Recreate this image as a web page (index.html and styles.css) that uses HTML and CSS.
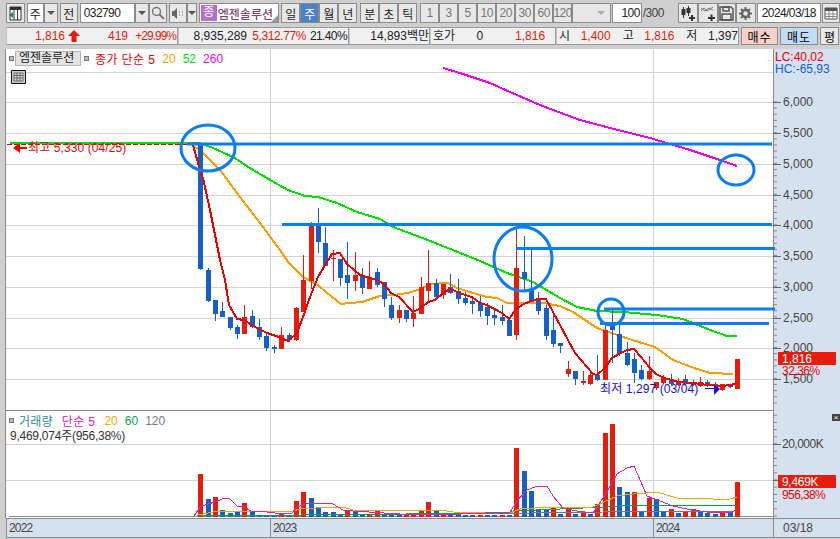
FILE: index.html
```html
<!DOCTYPE html>
<html lang="ko">
<head>
  <meta charset="UTF-8" />
  <title>엠젠솔루션 차트</title>
  <link rel="stylesheet" href="styles.css">
</head>
<body>
  <div class="toolbar">
    <button class="btn btn-icon"><svg width="15" height="15" viewBox="0 0 15 15"><path d="M2 1h11v13H2z" fill="#fff" stroke="#333"/><path d="M2 1h11v3H2z" fill="#333"/><path d="M6 4v10M9.5 4v10" stroke="#333"/><path d="M1 9l4-3v6z" fill="#2c7d7d"/></svg></button>
    <div class="tool-group">
      <span class="field field-type">주</span><button class="btn btn-drop"><i class="caret"></i></button>
    </div>
    <button class="btn btn-all">전</button>
    <div class="tool-group">
      <span class="field field-code">032790</span><button class="btn btn-drop"><i class="caret"></i></button>
      <button class="btn btn-icon-sm"><svg width="14" height="14" viewBox="0 0 14 14"><circle cx="5.5" cy="5.5" r="4" fill="none" stroke="#777" stroke-width="1.5"/><path d="M8.5 8.5l4.5 4.5" stroke="#777" stroke-width="2"/></svg></button>
    </div>
    <div class="tool-group">
      <button class="btn btn-speaker"><svg width="13" height="13" viewBox="0 0 13 13"><path d="M1 4h2l3-3v11l-3-3H1z" fill="#666"/><path d="M8 5h1M8 8h1M11 5h1M11 8h1" stroke="#666"/></svg></button>
      <button class="btn btn-drop-sm"><i class="caret"></i></button>
    </div>
    <div class="name-box"><span class="name-mark">종</span><span class="name-text">엠젠솔루션</span><i class="name-corner"></i></div>
    <div class="tool-group tool-periods">
      <button class="btn btn-period">일</button>
      <button class="btn btn-period btn-active">주</button>
      <button class="btn btn-period">월</button>
      <button class="btn btn-period">년</button>
    </div>
    <div class="tool-group tool-units">
      <button class="btn btn-period">분</button>
      <button class="btn btn-period">초</button>
      <button class="btn btn-period">틱</button>
    </div>
    <div class="tool-group tool-steps">
      <button class="btn btn-step">1</button>
      <button class="btn btn-step">3</button>
      <button class="btn btn-step">5</button>
      <button class="btn btn-step">10</button>
      <button class="btn btn-step">20</button>
      <button class="btn btn-step">30</button>
      <button class="btn btn-step">60</button>
      <button class="btn btn-step">120</button>
    </div>
    <div class="btn btn-blank"><i class="caret caret-light"></i></div>
    <span class="field field-count">100</span>
    <span class="count-total">/300</span>
    <div class="tool-group tool-icons">
      <button class="btn btn-tool"><svg width="16" height="16" viewBox="0 0 16 16"><path d="M3.5 2v11M8.5 1v10" stroke="#333"/><path d="M1.5 4h4v6h-4zM6.5 3h4v5h-4z" fill="#333"/><path d="M9 13h6M12 10v6" stroke="#333" stroke-width="2"/></svg></button>
      <button class="btn btn-tool"><svg width="16" height="16" viewBox="0 0 16 16"><path d="M1 6l3-3 3 3 3-2 3-2M1 3l4 3 4-3 4 2" fill="none" stroke="#777"/><path d="M8 13h7M11.5 9.5v6.5" stroke="#333" stroke-width="2"/></svg></button>
      <button class="btn btn-save"><svg width="15" height="15" viewBox="0 0 15 15"><path d="M1 1h11l2 2v11H1z" fill="none" stroke="#555" stroke-width="1.5"/><path d="M4 1h6v4H4zM3 8h9v6H3z" fill="none" stroke="#555" stroke-width="1.5"/></svg></button>
      <button class="btn btn-tool"><svg width="15" height="15" viewBox="0 0 15 15"><circle cx="7.5" cy="7.5" r="3.5" fill="none" stroke="#666" stroke-width="2.5"/><path d="M7.5 1v3M7.5 11v3M1 7.5h3M11 7.5h3M3 3l2 2M10 10l2 2M12 3l-2 2M5 10l-2 2" stroke="#666" stroke-width="2"/></svg></button>
    </div>
    <span class="field field-date">2024/03/18</span>
    <button class="btn btn-cal"><svg width="14" height="14" viewBox="0 0 14 14"><path d="M1 2h12v11H1z" fill="#fff" stroke="#555"/><path d="M1 2h12v3H1z" fill="#555"/><path d="M5 5v8M9 5v8M1 8h12M1 10.5h12" stroke="#888"/></svg></button>
  </div>

  <div class="quote">
    <div class="quote-cell cell-price">
      <span class="num up q-price">1,816</span>
      <svg class="q-arrow" width="14" height="12" viewBox="0 0 14 12"><path d="M7 0l6 6H9.5v6h-5V6H1z" fill="#e81c0c"/></svg>
      <span class="num up q-change">419</span>
      <span class="num up q-rate">+29.99%</span>
    </div>
    <div class="quote-cell cell-volume">
      <span class="num q-volume">8,935,289</span>
      <span class="num up q-volrate">5,312.77%</span>
      <span class="num q-turnover">21.40%</span>
    </div>
    <div class="quote-cell cell-amount">
      <span class="num q-amount">14,893백만</span>
    </div>
    <div class="quote-cell cell-ask">
      <span class="q-label">호가</span>
      <span class="num q-zero">0</span>
      <span class="num up q-ask">1,816</span>
    </div>
    <div class="quote-cell cell-ohl">
      <span class="q-label">시</span><span class="num up q-ohl">1,400</span>
      <span class="q-label q-gap">고</span><span class="num up q-ohl">1,816</span>
      <span class="q-label q-gap">저</span><span class="num q-ohl">1,397</span>
    </div>
    <button class="trade trade-buy">매수</button>
    <button class="trade trade-sell">매도</button>
    <button class="trade trade-flat">평</button>
  </div>

  <div class="chart">
    <div class="pane pane-price">
      <svg id="pricePlot" class="plot" width="767" height="362" viewBox="6 49 767 362"></svg>
      <svg id="priceAxis" class="axis" width="67" height="362" viewBox="773 49 67 362"></svg>
      <div class="legend">
        <i class="dot"></i><span class="legend-name">엠젠솔루션</span><i class="dot"></i>
        <span class="c-red legend-first">종가 단순 5</span>
        <span class="c-orange">20</span><span class="c-green">52</span><span class="c-magenta">260</span>
      </div>
      <svg class="grid-icon" width="15" height="14" viewBox="0 0 15 14"><path d="M.5.5h14v13H.5z" fill="#ccc" stroke="#111"/><path d="M3 3h9v8H3z" fill="#ddd" stroke="#666"/><path d="M6 3v8M9 3v8M3 5.5h9M3 8h9" stroke="#666"/></svg>
    </div>
    <div class="pane pane-volume">
      <svg id="volumePlot" class="plot" width="767" height="107" viewBox="6 412 767 107"></svg>
      <svg id="volumeAxis" class="axis" width="67" height="107" viewBox="773 412 67 107"></svg>
      <div class="legend">
        <i class="dot"></i><span class="c-teal legend-title">거래량</span>
        <span class="c-pink legend-ma">단순 5</span>
        <span class="c-amber">20</span><span class="c-dgreen">60</span><span class="c-gray">120</span>
      </div>
      <div class="volume-note">9,469,074주(956,38%)</div>
      <button class="close-btn">×</button>
    </div>
    <div class="dates">
      <span class="date date-2022">2022</span>
      <span class="date date-2023">2023</span>
      <span class="date date-2024">2024</span>
      <span class="date date-last">03/18</span>
    </div>
  </div>

  <script src="chart.js"></script>
</body>
</html>
```

FILE: styles.css
```css
* {
  box-sizing: border-box;
}

body {
  margin: 0;
  width: 840px;
  height: 539px;
  overflow: hidden;
  background-color: #cfcfcf;
  font-family: "Liberation Sans", "Noto Sans CJK KR", sans-serif;
  font-size: 12px;
  color: #222;
}

button {
  font-family: inherit;
  font-size: 12px;
  padding: 0;
  margin: 0;
}

/* top toolbar */
.toolbar {
  display: flex;
  align-items: stretch;
  height: 20px;
  margin-top: 3px;
  padding-left: 6px;
}

.tool-group {
  display: flex;
}

.btn {
  display: flex;
  align-items: center;
  justify-content: center;
  height: 20px;
  border: 1px solid #8b8b8b;
  background-color: #e8e8e8;
  color: #222;
}

.btn-icon { width: 19px; margin-right: 2px; }
.btn-drop { width: 14px; }
.btn-all { width: 18px; margin: 0 2px; }
.btn-icon-sm { width: 18px; }
.btn-speaker { width: 18px; margin-left: 2px; }
.btn-drop-sm { width: 10px; }
.btn-period { width: 19px; }
.btn-step { width: 19px; color: #777; letter-spacing: -0.5px; }
.btn-tool { width: 20px; }
.btn-save { width: 18px; }
.btn-cal { width: 18px; margin-left: 1px; }
.btn-active { background-color: #4a82c4; color: #fff; }
.btn-blank { width: 39px; justify-content: flex-end; padding-right: 5px; }

.tool-periods { margin-left: 2px; }
.tool-units { margin-left: 3px; }
.tool-steps { margin-left: 3px; }
.tool-icons { margin-left: 10px; margin-right: 1px; }

.caret {
  display: block;
  width: 0;
  height: 0;
  border-left: 4px solid transparent;
  border-right: 4px solid transparent;
  border-top: 4px solid #555;
}

.caret-light {
  border-top-color: #aaa;
}

.field {
  display: flex;
  align-items: center;
  height: 20px;
  border: 1px solid #8b8b8b;
  background-color: #fff;
}

.field-type { width: 17px; justify-content: center; }
.field-code { width: 55px; padding-left: 3px; letter-spacing: -0.6px; }
.field-count { width: 30px; margin-left: 1px; justify-content: flex-end; padding-right: 1px; letter-spacing: -0.6px; }
.field-date { width: 65px; justify-content: center; letter-spacing: -0.6px; }

.count-total {
  width: 25px;
  margin-left: 1px;
  line-height: 20px;
  color: #444;
  letter-spacing: -0.6px;
}

.name-box {
  position: relative;
  display: flex;
  align-items: center;
  width: 81px;
  height: 20px;
  margin-left: 2px;
  border: 1px solid #8b8b8b;
  background-color: #fff;
}

.name-mark {
  width: 16px;
  height: 16px;
  margin-left: 1px;
  background-color: #b46fd0;
  color: #fff;
  line-height: 15px;
  text-align: center;
}

.name-text {
  margin-left: 1px;
  color: #6b0f5f;
  white-space: nowrap;
}

.name-corner {
  position: absolute;
  right: 0;
  bottom: 0;
  border-left: 7px solid transparent;
  border-bottom: 7px solid #999;
}

/* quote strip */
.quote {
  display: flex;
  height: 18px;
  margin-top: 4px;
  padding-left: 6px;
  line-height: 16px;
}

.quote-cell {
  display: flex;
  height: 18px;
  border: 1px solid #9a9a9a;
  border-left-color: #c4c4c4;
  background-color: #f0f0f0;
  white-space: nowrap;
}

.cell-price { width: 172px; }
.cell-volume { width: 171px; }
.cell-amount { width: 81px; }
.cell-ask { width: 126px; }
.cell-ohl { width: 183px; }

.num { display: block; text-align: right; }
.up { color: #e81c0c; }

.q-price { width: 58px; }
.q-arrow { margin: 2px 0 0 2px; }
.q-change { width: 47px; }
.q-rate { width: 48px; letter-spacing: -1px; }
.q-volume { width: 68px; }
.q-volrate { width: 59px; letter-spacing: -0.4px; }
.q-turnover { width: 41px; letter-spacing: -0.6px; }
.q-amount { width: 79px; }
.q-label { display: block; margin-left: 2px; }
.q-zero { width: 28px; }
.q-ask { width: 62px; }
.q-ohl { width: 41px; }
.q-gap { margin-left: 12px; }

.trade {
  height: 18px;
  margin-left: 2px;
  border: 1px solid #8b8b8b;
  letter-spacing: 1px;
}

.trade-buy { width: 37px; background-color: #f5d0c8; }
.trade-sell { width: 38px; background-color: #c2daf2; }
.trade-flat { width: 19px; background-color: #e8e8e8; letter-spacing: 0; }

/* chart area */
.chart {
  width: 834px;
  height: 489px;
  margin: 4px 0 0 6px;
  border-bottom: 1px solid #8b8b8b;
  background-color: #fff;
}

.pane {
  position: relative;
  display: flex;
}

.pane-price {
  height: 362px;
}

.pane-volume {
  height: 107px;
}

.plot {
  display: block;
  position: relative;
  z-index: 1;
  overflow: visible;
  background-color: #fff;
}

.plot polyline {
  shape-rendering: crispEdges;
}

.axis {
  display: block;
  background-color: #d6e1ef;
}

.legend {
  position: absolute;
  z-index: 2;
  top: 2px;
  left: 3px;
  display: flex;
  align-items: center;
  height: 15px;
  white-space: nowrap;
}

.legend .c-orange, .legend .c-green, .legend .c-magenta,
.legend .c-dgreen, .legend .c-gray {
  margin-left: 7px;
}

.legend .c-amber { margin-left: 9px; }

.legend-name {
  width: 66px;
  height: 15px;
  margin: 0 3px 0 1px;
  padding-left: 3px;
  border: 1px solid #b5b5b5;
  background-color: #e4e4e4;
  line-height: 13px;
}

.legend-first { margin-left: 6px; letter-spacing: 0.4px; }
.legend-title { margin-left: 5px; letter-spacing: 0.2px; }
.legend-ma { margin-left: 9px; letter-spacing: 0.4px; }

.dot {
  display: block;
  width: 5px;
  height: 5px;
  border: 1px solid #777;
  background-color: #bbb;
}

.c-red { color: #f00000; }
.c-orange { color: #ff9c00; }
.c-green { color: #00e000; }
.c-magenta { color: #f000f0; }
.c-teal { color: #2a8f8f; }
.c-pink { color: #e020b0; }
.c-amber { color: #f0a800; }
.c-dgreen { color: #149a4a; }
.c-gray { color: #777; }

.grid-icon {
  position: absolute;
  z-index: 2;
  top: 21px;
  left: 5px;
}

.volume-note {
  position: absolute;
  z-index: 2;
  top: 15px;
  left: 4px;
  letter-spacing: -0.25px;
  color: #333;
}

.close-btn {
  position: absolute;
  z-index: 2;
  top: 3px;
  right: 0;
  width: 8px;
  height: 7px;
  border: 0;
  background-color: #444;
  color: #fff;
  font-size: 8px;
  line-height: 6px;
}

.dates {
  display: flex;
  height: 19px;
  background-color: #d6e1ef;
  border-top: 1px solid #8b8b8b;
  border-left: 1px solid #8b8b8b;
  line-height: 18px;
  color: #444;
  letter-spacing: -0.8px;
}

.date { padding-left: 2px; border-right: 1px solid #8b8b8b; }
.date-2022 { width: 264px; }
.date-2023 { width: 383px; }
.date-2024 { width: 120px; }
.date-last { width: 66px; padding-left: 9px; border-right: 0; letter-spacing: 0; }
```

FILE: chart.js
```js
const NS = 'http://www.w3.org/2000/svg';
const RED = '#e81c0c';
const BLUE = '#155fc9';
const GRIDLINE = '#d4d4d4';

// screen coordinates read off the chart: body top, body bottom, wick top, wick bottom, colour
const candles = [
  [144,269,144,270,'b'],[270,301,268,302,'b'],[300,314,300,321,'b'],[311,317,302,317,'b'],
  [317,328,317,330,'b'],[327,334,325,339,'b'],[317,334,305,334,'r'],[316,327,310,328,'b'],
  [327,337,319,340,'b'],[336,348,334,351,'b'],[347,349,345,353,'b'],[335,349,327,349,'r'],
  [335,340,333,342,'b'],[308,340,307,341,'r'],[280,312,255,312,'r'],[226,281,222,289,'r'],
  [226,242,208,253,'b'],[243,266,227,266,'b'],[258,259,250,281,'r'],[259,278,259,286,'b'],
  [275,283,242,299,'b'],[275,281,252,291,'r'],[275,288,268,294,'b'],[278,289,261,289,'r'],
  [272,285,268,287,'b'],[282,299,282,307,'b'],[305,318,297,320,'b'],[310,318,305,323,'r'],
  [310,319,310,322,'b'],[313,319,296,327,'r'],[287,314,277,314,'r'],[283,291,250,302,'r'],
  [283,297,279,300,'b'],[284,295,284,299,'r'],[287,293,274,294,'b'],[291,299,279,304,'b'],
  [298,303,292,305,'b'],[301,304,296,314,'b'],[303,311,296,317,'b'],[307,316,303,325,'b'],
  [315,318,309,325,'b'],[317,321,305,325,'b'],[320,336,320,336,'b'],[268,335,229,340,'r'],
  [272,279,236,290,'b'],[289,302,247,302,'b'],[298,311,292,315,'b'],[308,336,305,340,'b'],
  [330,344,315,347,'b'],[343,346,343,353,'b'],[369,374,361,377,'r'],[371,379,371,385,'b'],
  [381,383,371,385,'r'],[375,384,373,385,'r'],[375,380,355,381,'b'],[330,380,323,380,'r'],
  [323,330,310,363,'b'],[334,354,322,356,'b'],[353,365,342,366,'b'],[359,373,353,383,'b'],
  [370,379,365,380,'b'],[371,379,356,380,'r'],[382,388,382,390,'r'],[378,383,375,384,'r'],
  [379,384,374,385,'b'],[381,385,378,386,'r'],[379,384,375,385,'b'],[382,385,380,386,'r'],
  [382,386,377,387,'r'],[382,386,380,387,'b'],[384,386,382,387,'r'],[384,390,384,391,'r'],
  [385,387,384,388,'b'],[359,389,359,389,'r']
];

// top of each volume bar
const volumes = [
  475,500,498,511,514,513,504,513,516,516,516,514,516,502,493,499,509,513,513,516,
  512,513,515,516,512,515,515,516,516,514,512,503,512,515,516,515,516,516,516,516,
  516,516,516,449,472,492,511,511,509,515,509,515,513,515,505,434,425,488,493,493,
  513,499,500,512,510,514,513,510,513,514,515,514,512,483
];
const volumeColors =
  'rbrbbbrbbbbrbrrbbbbbrbbrrbbbrr' +
  'rrbrbbbbrbbrbr' +
  'bbbbrbrbrbrrrbbrbrbbrbrrbbbrbr';

const ma5 = [[193,145],[200,170],[203,178],[210,210],[220,260],[225,280],[229,305],[237,319],[244,320],[255,327],[267,333],[279,337],[288,341],[297,333],[303,317],[310,297],[318,277],[325,265],[332,254],[340,253],[347,264],[360,275],[377,280],[384,284],[391,293],[399,297],[413,312],[421,308],[428,302],[435,300],[443,293],[450,289],[465,295],[472,297],[480,303],[487,305],[502,313],[509,319],[516,309],[524,304],[531,301],[538,299],[546,299],[553,312],[575,353],[593,374],[597,375],[605,368],[612,358],[619,354],[627,350],[634,349],[641,357],[649,367],[656,374],[664,378],[679,382],[693,383],[708,385],[722,386],[730,385],[737,383]];
const ma20 = [[193,145],[203,153],[220,170],[240,197],[260,223],[280,250],[288,262],[303,277],[318,285],[327,293],[341,304],[350,303],[362,302],[380,296],[393,295],[408,293],[418,290],[430,284],[448,283],[457,288],[473,293],[487,297],[497,298],[507,303],[525,303],[543,303],[560,306],[573,312],[597,328],[623,337],[655,347],[673,360],[697,369],[710,373],[733,374]];
const ma52 = [[10,143],[200,143],[213,148],[233,157],[253,170],[279,185],[288,190],[305,196],[318,197],[337,203],[357,212],[380,219],[393,227],[420,237],[453,250],[480,261],[507,273],[533,282],[560,298],[577,307],[597,311],[623,312],[657,315],[683,319],[710,330],[727,336],[737,336]];
const ma260 = [[443,68],[460,73],[490,83],[510,92],[540,105],[580,120],[610,128],[650,138],[690,150],[720,160],[737,166]];

const volMa5 = [[194,517],[200,508],[208,505],[215,503],[222,500],[229,499],[237,507],[244,508],[251,512],[267,513],[283,515],[292,514],[297,508],[308,504],[327,504],[333,505],[343,511],[353,512],[400,515],[460,515],[510,513],[517,502],[527,491],[535,488],[547,487],[553,497],[563,509],[577,512],[593,514],[607,493],[617,475],[627,469],[634,467],[647,497],[660,502],[673,507],[687,510],[707,513],[732,513],[737,510]];
const volMa20 = [[198,516],[213,513],[233,512],[293,512],[300,510],[333,508],[343,508],[353,511],[447,512],[453,513],[510,514],[520,510],[550,508],[593,508],[617,497],[633,495],[657,493],[677,499],[713,500],[730,500],[737,498]];
const volMa60 = [[197,517],[510,514],[513,512],[607,508],[633,506],[737,506]];
const volMa120 = [[459,515],[603,513],[623,512],[733,512]];

const annotations = [[187,144,772],[282,224.5,772],[516,248.5,775],[604,309,775],[600,323.5,769]];
const circles = [[208,148,27,23],[523,259,29,32],[611,312,13,13],[736,170,18,15]];

function add(svg, name, attrs, text) {
  const el = document.createElementNS(NS, name);
  for (const key in attrs) el.setAttribute(key, attrs[key]);
  if (text) el.textContent = text;
  svg.appendChild(el);
  return el;
}

function candleX(i) {
  return Math.round(200.3 + 7.35 * i);
}

function line(svg, x1, y1, x2, y2, stroke, width) {
  add(svg, 'line', { x1, y1, x2, y2, stroke, 'stroke-width': width || 1 });
}

function polyline(svg, points, stroke, width) {
  add(svg, 'polyline', { points: points.join(' '), fill: 'none', stroke, 'stroke-width': width });
}

function label(svg, x, y, text, fill, spacing) {
  add(svg, 'text', {
    x, y, fill,
    'letter-spacing': spacing || 0,
    'font-family': '"Liberation Sans", "Noto Sans CJK KR", sans-serif',
    'font-size': 12
  }, text);
}

function drawPricePlot(svg) {
  [72,102,133,164,195,225,256,287,318,348,379].forEach(y => line(svg, 6, y + .5, 773, y + .5, GRIDLINE));
  [270.5,653.5].forEach(x => line(svg, x, 49, x, 411, GRIDLINE));
  line(svg, 5.5, 49, 5.5, 411, '#8b8b8b');
  line(svg, 6, 410.5, 773, 410.5, '#8b8b8b');

  polyline(svg, ma52, '#00e000', 2);
  add(svg, 'line', { x1: 7, y1: 144.5, x2: 193, y2: 144.5, stroke: '#f00000', 'stroke-dasharray': '5 2' });
  polyline(svg, ma20, '#ff9c00', 2);

  candles.forEach((c, i) => {
    const x = candleX(i);
    const color = c[4] === 'r' ? RED : BLUE;
    line(svg, x + .5, c[2], x + .5, c[3], color);
    add(svg, 'rect', { x: x - 2, y: c[0], width: 5, height: Math.max(c[1] - c[0], 1), fill: color });
  });

  polyline(svg, ma5, '#f00000', 2);
  polyline(svg, ma260, '#f000f0', 2);

  annotations.forEach(a => line(svg, a[0], a[1], a[2], a[1], '#0a7df0', 3));
  circles.forEach(c => add(svg, 'ellipse', { cx: c[0], cy: c[1], rx: c[2], ry: c[3], fill: 'none', stroke: '#0a7df0', 'stroke-width': 3 }));

  add(svg, 'path', { d: 'M13 148l7-5v4h7v2h-7v4z', fill: '#f00000' });
  label(svg, 28, 152, '최고 5,330 (04/25)', '#f00000', 0.1);
  label(svg, 600, 393, '최저 1,297 (03/04)', '#1010e0', 0.1);
  line(svg, 705, 388.5, 714, 388.5, '#1010e0');
  add(svg, 'path', { d: 'M714 384l6 5-6 6z', fill: '#1010e0' });
}

function drawPriceAxis(svg) {
  line(svg, 773.5, 49, 773.5, 411, '#8b8b8b');
  for (let y = 102; y < 405; y += 6.14) line(svg, 773, y, 777, y, '#888');
  const prices = ['6,000','5,500','5,000','4,500','4,000','3,500','3,000','2,500','2,000','1,500'];
  const ys = [102,133,164,195,225,256,287,318,348,379];
  prices.forEach((p, i) => {
    line(svg, 773, ys[i] + .5, 781, ys[i] + .5, '#666');
    label(svg, 783, ys[i] + 4, p, '#444');
  });
  label(svg, 775, 61, 'LC:40,02', '#f00000');
  label(svg, 775, 73, 'HC:-65,93', '#1060d8');
  add(svg, 'rect', { x: 778, y: 352, width: 58, height: 13, fill: RED });
  label(svg, 782, 363, '1,816', '#fff');
  label(svg, 782, 375, '32,36%', '#f00000', -0.5);
}

function drawVolumePlot(svg) {
  [445,481].forEach(y => line(svg, 6, y + .5, 773, y + .5, GRIDLINE));
  [270.5,653.5].forEach(x => line(svg, x, 412, x, 519, GRIDLINE));
  line(svg, 5.5, 412, 5.5, 519, '#8b8b8b');
  line(svg, 9, 517.5, 773, 517.5, '#8b8b8b');

  volumes.forEach((top, i) => {
    add(svg, 'rect', {
      x: candleX(i) - 2, y: top, width: 5, height: 518 - top,
      fill: volumeColors[i] === 'r' ? RED : BLUE
    });
  });

  polyline(svg, volMa120, '#777', 1);
  polyline(svg, volMa60, '#149a4a', 1);
  polyline(svg, volMa20, '#f0a800', 1);
  polyline(svg, volMa5, '#e020b0', 1);
}

function drawVolumeAxis(svg) {
  line(svg, 773.5, 412, 773.5, 519, '#8b8b8b');
  for (let y = 445; y < 518; y += 7.2) line(svg, 773, y, 777, y, '#888');
  for (let y = 445; y > 412; y -= 7.2) line(svg, 773, y, 777, y, '#888');
  line(svg, 773, 445.5, 781, 445.5, '#666');
  line(svg, 773, 481.5, 781, 481.5, '#666');
  label(svg, 782, 449, '20,000K', '#444', -0.5);
  add(svg, 'rect', { x: 778, y: 476, width: 58, height: 13, fill: RED });
  label(svg, 782, 487, '9,469K', '#fff', -0.3);
  label(svg, 782, 500, '956,38%', '#f00000', -0.6);
}

drawPricePlot(document.getElementById('pricePlot'));
drawPriceAxis(document.getElementById('priceAxis'));
drawVolumePlot(document.getElementById('volumePlot'));
drawVolumeAxis(document.getElementById('volumeAxis'));
```
